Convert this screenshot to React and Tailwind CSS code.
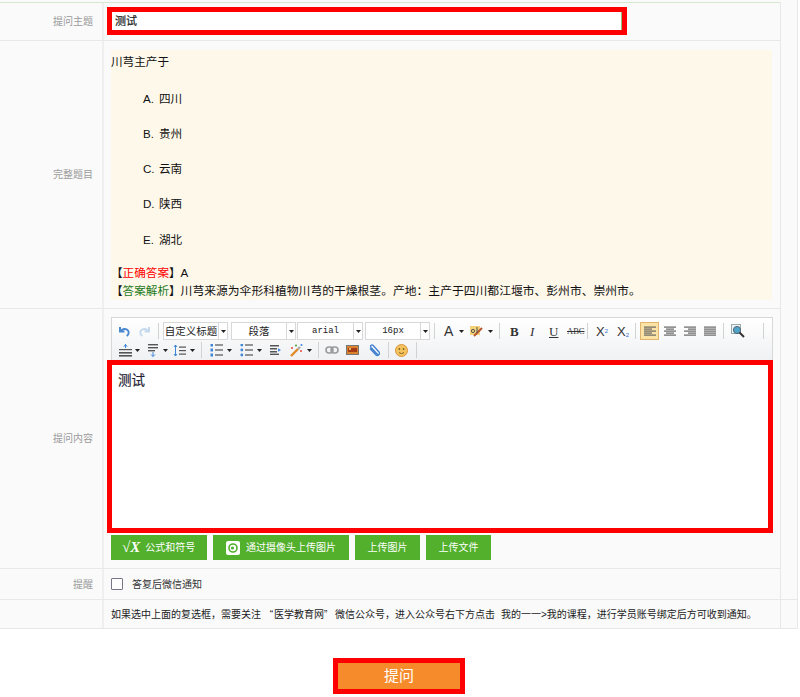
import React from "react";

const font = { fontFamily: '"Liberation Sans","Noto Sans CJK SC",sans-serif' };

function Arrow({ className }) {
  return (
    <svg width="5" height="3" viewBox="0 0 5 3" className={className}>
      <path d="M0 0H5L2.5 3Z" fill="#222" />
    </svg>
  );
}

function Sep({ className }) {
  return <div className={"w-px h-[16px] bg-[#d0d2d4] shrink-0 " + className} />;
}

function Sel({ className, w, text, mono }) {
  return (
    <div className={"h-[18px] flex items-stretch border border-[#d8d8d8] bg-white shrink-0 " + className} style={{ width: w }}>
      <div className={"flex-1 text-center leading-[16px] text-[#222] whitespace-nowrap " + (mono ? "text-[9px] font-['Liberation_Mono']" : "text-[10.5px]")}>{text}</div>
      <div className="w-[9px] border-l border-[#d8d8d8] flex items-center justify-center"><Arrow /></div>
    </div>
  );
}

function Lines({ className, kind }) {
  const rows = kind === "left" ? [[0, 12], [0, 8], [0, 12], [0, 8], [0, 12]] : kind === "center" ? [[0, 12], [2, 10], [0, 12], [2, 10], [0, 12]] : kind === "right" ? [[0, 12], [4, 12], [0, 12], [4, 12], [0, 12]] : [[0, 12], [0, 12], [0, 12], [0, 12], [0, 12]];
  return (
    <svg width="12" height="11" viewBox="0 0 12 11" className={className}>
      {rows.map((r, i) => (
        <rect key={i} x={r[0]} y={i * 2 + 0.5} width={r[1] - r[0]} height="1.2" fill="#666" />
      ))}
    </svg>
  );
}

function ListIcon({ className, dots }) {
  return (
    <svg width="13" height="13" viewBox="0 0 13 13" className={className}>
      {[1, 6, 11].map((y) => (
        <g key={y}>
          <rect x="5" y={y - 0.6} width="8" height="1.2" fill="#555" />
          {dots ? <circle cx="1.8" cy={y} r="1.4" fill="#3f86d8" /> : <rect x="0.5" y={y - 1.5} width="2.5" height="3" fill="#3f86d8" />}
        </g>
      ))}
    </svg>
  );
}

function Row({ label, className, children }) {
  return (
    <div className={"flex border-b border-[#e8e8e8] " + className}>
      <div className="w-[104px] shrink-0 border-r-2 border-[#efefef] flex items-center justify-end pr-[9px] text-[10px] text-[#9a9a9a]">{label}</div>
      <div className="flex-1 min-w-0">{children}</div>
    </div>
  );
}

function GreenBtn({ className, children }) {
  return (
    <div className={"h-[25px] bg-[#52b02c] text-white text-[10px] flex items-center justify-center shrink-0 " + className}>{children}</div>
  );
}

const options = [
  ["A.", "四川"],
  ["B.", "贵州"],
  ["C.", "云南"],
  ["D.", "陕西"],
  ["E.", "湖北"],
];

export default function App() {
  return (
    <div className="w-[800px] h-[697px] bg-white overflow-hidden" style={font}>
      <div className="flex w-[798px] border-r border-[#e8e8e8] bg-[#fafafa] pt-[2px]">
        <div className="w-[780px] border-t border-[#d5e8cf]">
          <Row label="提问主题" className="h-[38px]">
            <div className="ml-[3px] mt-[4px] w-[520px] h-[28px] border-[5px] border-[#ff0000] bg-white flex items-center pl-[3px]">
              <span className="text-[11px] text-[#222] [-webkit-text-stroke:0.2px_#222] flex-1">测试</span>
              <div className="w-px h-full bg-[#8cc47a]" />
            </div>
          </Row>
          <Row label="完整题目" className="h-[268px]">
            <div className="ml-[7px] mt-[9px] w-[661px] h-[250px] bg-[#fef8ea] text-[11.6px] text-[#111]">
              <div className="h-[23px] leading-[23px]">川芎主产于</div>
              <div className="mt-[8px] pl-[32px]">
                {options.map(([k, v]) => (
                  <div key={k} className="h-[35.2px] flex items-center">
                    <span className="w-[16px]">{k}</span>
                    <span>{v}</span>
                  </div>
                ))}
              </div>
              <div className="mt-[7px] h-[18px] leading-[18px] whitespace-nowrap">
                【<span className="text-[#ff0000]">正确答案</span>】A
              </div>
              <div className="h-[18px] leading-[18px] whitespace-nowrap">
                【<span className="text-[#1c7a1c]">答案解析</span>】<span className="text-[11.8px]">川芎来源为伞形科植物川芎的干燥根茎。产地：主产于四川都江堰市、彭州市、崇州市。</span>
              </div>
            </div>
          </Row>
          <Row label="提问内容" className="h-[260px]">
            <div className="pt-[8px]">
              <div className="ml-[7px] w-[662px] h-[43px] border border-[#d8d8d8] border-b-0 bg-gradient-to-b from-white to-[#f0f1f3]">
                <div className="flex items-center h-[18px] mt-[4px]">
                  <svg width="11" height="11" viewBox="0 0 11 11" className="ml-[7px] shrink-0"><path d="M1 1V5.5H5.5M1.3 5.3C3 2.6 7 2 9 4.5C10.2 6.2 9.6 8.6 7.8 10" fill="none" stroke="#4a88cf" strokeWidth="2" /></svg>
                  <svg width="11" height="11" viewBox="0 0 11 11" className="ml-[9px] shrink-0"><path d="M10 1V5.5H5.5M9.7 5.3C8 2.6 4 2 2 4.5C.8 6.2 1.4 8.6 3.2 10" fill="none" stroke="#c5d9ee" strokeWidth="2" /></svg>
                  <Sep className="ml-[8px]" />
                  <Sel className="ml-[4px]" w={65} text="自定义标题" />
                  <Sel className="ml-[3px]" w={65} text="段落" />
                  <Sel className="ml-[1px]" w={66} text="arial" mono />
                  <Sel className="ml-[2px]" w={65} text="16px" mono />
                  <Sep className="ml-[4px]" />
                  <span className="ml-[9px] w-[10px] text-[14px] leading-none text-[#333] shrink-0">A</span>
                  <Arrow className="ml-[5px] shrink-0" />
                  <svg width="14" height="13" viewBox="0 0 14 13" className="ml-[6px] shrink-0"><rect x="0" y="1" width="10" height="9" fill="#f4d27a" /><path d="M4 11L12 3" stroke="#b5562e" strokeWidth="2" /><circle cx="3" cy="6" r="1.6" fill="none" stroke="#555" /><path d="M7 2V8" stroke="#555" /></svg>
                  <Arrow className="ml-[4px] shrink-0" />
                  <Sep className="ml-[6px]" />
                  <span className="ml-[10px] w-[9px] text-[13px] leading-none font-bold text-[#333] font-['Liberation_Serif'] shrink-0">B</span>
                  <span className="ml-[11px] w-[6px] text-[13px] leading-none italic text-[#333] font-['Liberation_Serif'] shrink-0">I</span>
                  <span className="ml-[13px] w-[9px] text-[13px] leading-none underline text-[#333] font-['Liberation_Serif'] shrink-0">U</span>
                  <span className="ml-[9px] w-[14px] text-[8.5px] leading-none line-through text-[#333] font-['Liberation_Serif'] shrink-0">ABC</span>
                  <Sep className="ml-[6px]" />
                  <span className="ml-[8px] w-[12px] text-[13px] leading-none text-[#333] shrink-0 whitespace-nowrap">X<sup className="text-[6px] text-[#2f6fd0]">2</sup></span>
                  <span className="ml-[9px] w-[11px] text-[13px] leading-none text-[#333] shrink-0 whitespace-nowrap">X<sub className="text-[6px] text-[#2f6fd0]">2</sub></span>
                  <Sep className="ml-[7px]" />
                  <div className="ml-[4px] w-[19px] h-[18px] bg-[#fbe3a5] border border-[#e0b46a] flex items-center justify-center shrink-0"><Lines kind="left" /></div>
                  <Lines kind="center" className="ml-[5px] shrink-0" />
                  <Lines kind="right" className="ml-[8px] shrink-0" />
                  <Lines kind="just" className="ml-[8px] shrink-0" />
                  <Sep className="ml-[7px]" />
                  <svg width="14" height="14" viewBox="0 0 14 14" className="ml-[7px] shrink-0"><rect x="0.5" y="0.5" width="9" height="9" fill="#eef3f7" stroke="#9aa" /><circle cx="6" cy="6" r="3.6" fill="#4ea4c8" stroke="#567" /><path d="M8.5 8.5L13 13" stroke="#333" strokeWidth="2" /></svg>
                  <Sep className="ml-[18px]" />
                </div>
                <div className="flex items-center h-[18px] mt-[1px]">
                  <svg width="13" height="13" viewBox="0 0 13 13" className="ml-[7px] shrink-0"><path d="M6.5 0V4M4.8 2.6L6.5 .5L8.2 2.6" fill="none" stroke="#3f86d8" /><rect x="0" y="5" width="13" height="1.2" fill="#555" /><rect x="0" y="8" width="13" height="1.6" fill="#555" /><rect x="0" y="11" width="13" height="1.6" fill="#555" /></svg>
                  <Arrow className="ml-[3px] shrink-0" />
                  <svg width="10" height="13" viewBox="0 0 10 13" className="ml-[8px] shrink-0"><rect x="0" y="0" width="10" height="1.4" fill="#555" /><rect x="0" y="3" width="10" height="1.4" fill="#555" /><rect x="0" y="6" width="7" height="1.4" fill="#555" /><path d="M5 8V12.5M3 10.5L5 12.5L7 10.5" fill="none" stroke="#3f86d8" /></svg>
                  <Arrow className="ml-[5px] shrink-0" />
                  <svg width="13" height="13" viewBox="0 0 13 13" className="ml-[5px] shrink-0"><path d="M2.5 1V12M1 3L2.5 1L4 3M1 10L2.5 12L4 10" fill="none" stroke="#3f86d8" /><rect x="6" y="2.5" width="7" height="1.2" fill="#555" /><rect x="6" y="6" width="7" height="1.2" fill="#555" /><rect x="6" y="9.5" width="7" height="1.2" fill="#555" /></svg>
                  <Arrow className="ml-[4px] shrink-0" />
                  <Sep className="ml-[6px]" />
                  <ListIcon className="ml-[8px] shrink-0" />
                  <Arrow className="ml-[4px] shrink-0" />
                  <ListIcon dots className="ml-[8px] shrink-0" />
                  <Arrow className="ml-[4px] shrink-0" />
                  <svg width="11" height="10" viewBox="0 0 11 10" className="ml-[8px] shrink-0"><rect x="0" y="0" width="9" height="1.5" fill="#555" /><rect x="0" y="3" width="7" height="1.5" fill="#555" /><rect x="0" y="6" width="7" height="1.5" fill="#555" /><rect x="0" y="8.6" width="9" height="1.4" fill="#555" /><path d="M8 3.2L11 5L8 6.8Z" fill="#3f86d8" /></svg>
                  <svg width="13" height="13" viewBox="0 0 13 13" className="ml-[9px] shrink-0"><path d="M1 12L8 5" stroke="#e08a2a" strokeWidth="2.4" /><path d="M8 5L10 3" stroke="#aaa" strokeWidth="2.4" /><circle cx="2" cy="4" r="1" fill="#e04a3a" /><circle cx="6" cy="1.5" r="1" fill="#4a9a3a" /><circle cx="11" cy="7" r="1" fill="#e04a3a" /><circle cx="11.5" cy="1" r="1" fill="#3f86d8" /></svg>
                  <Arrow className="ml-[4px] shrink-0" />
                  <Sep className="ml-[6px]" />
                  <svg width="14" height="8" viewBox="0 0 14 8" className="ml-[6px] shrink-0"><rect x="1" y="1" width="7" height="6" rx="3" fill="none" stroke="#9a9a9a" strokeWidth="1.6" /><rect x="6" y="1" width="7" height="6" rx="3" fill="none" stroke="#9a9a9a" strokeWidth="1.6" /></svg>
                  <svg width="13" height="10" viewBox="0 0 13 10" className="ml-[7px] shrink-0"><rect x="0.5" y="0.5" width="12" height="9" fill="#d9822b" stroke="#777" /><rect x="2" y="3" width="9" height="4" fill="#a33c14" /><circle cx="4" cy="4" r="1" fill="#ffd98a" /></svg>
                  <svg width="12" height="13" viewBox="0 0 12 13" className="ml-[9px] shrink-0"><path d="M10.5 11.5L3 3.5C1.5 1.5 4 .2 5.2 1.5L11 8C12.4 10 10 12.5 8 11L2 4.5" fill="none" stroke="#3f7fd0" strokeWidth="1.3" /></svg>
                  <Sep className="ml-[8px]" />
                  <svg width="13" height="13" viewBox="0 0 13 13" className="ml-[6px] shrink-0"><circle cx="6.5" cy="6.5" r="6" fill="#f3c35e" stroke="#d8933a" /><circle cx="4.4" cy="5" r="0.9" fill="#8a5a1e" /><circle cx="8.6" cy="5" r="0.9" fill="#8a5a1e" /><path d="M4 8.5C5.2 9.8 7.8 9.8 9 8.5" fill="none" stroke="#8a5a1e" /></svg>
                  <Sep className="ml-[8px]" />
                </div>
              </div>
              <div className="ml-[3px] w-[666px] h-[173px] border-[5px] border-[#ff0000] bg-white pl-[6px] pt-[6px] text-[13.5px] leading-[20px] text-[#1f2233] [-webkit-text-stroke:0.2px_#1f2233]">测试</div>
              <div className="ml-[7px] mt-[2px] flex">
                <GreenBtn className="w-[96px] !justify-start pl-[11px]">
                  <span className="italic font-bold text-[15px] leading-none font-['Liberation_Serif'] mr-[5px]">√X</span>公式和符号
                </GreenBtn>
                <GreenBtn className="ml-[6px] w-[136px]">
                  <svg width="14" height="14" viewBox="0 0 14 14" className="mr-[6px]"><rect width="14" height="14" rx="2" fill="#fff" /><circle cx="7" cy="7" r="4" fill="none" stroke="#52b02c" strokeWidth="1.6" /><circle cx="6.5" cy="7" r="1.6" fill="#52b02c" /></svg>
                  通过摄像头上传图片
                </GreenBtn>
                <GreenBtn className="ml-[6px] w-[65px]">上传图片</GreenBtn>
                <GreenBtn className="ml-[6px] w-[65px]">上传文件</GreenBtn>
              </div>
            </div>
          </Row>
          <Row label="提醒" className="h-[31px]">
            <div className="h-full flex items-center pl-[7px] text-[10px] text-[#333]">
              <div className="w-[12px] h-[12px] border border-[#777788] bg-white rounded-[1px]" />
              <span className="ml-[9px]">答复后微信通知</span>
            </div>
          </Row>
          <Row label="" className="h-[29px]">
            <div className="h-full flex items-center pl-[7px] text-[10px] text-[#222] whitespace-nowrap">
              如果选中上面的复选框，需要关注<span className="inline-block w-[13px] text-right pr-[1px]">“</span>医学教育网<span className="inline-block w-[11px]">”</span>微信公众号，进入公众号右下方点击<span className="ml-[6px]">我的一一&gt;我的课程，进行学员账号绑定后方可收到通知。</span>
            </div>
          </Row>
        </div>
        <div className="flex-1 border-l border-[#e8e8e8] flex flex-col justify-end">
          <div className="h-[30px] border-t border-b border-[#e8e8e8]" />
        </div>
      </div>
      <div className="mt-[29px] ml-[333px] w-[132px] h-[36px] border-[5px] border-[#ff0000] bg-[#f68b2c] text-white text-[15px] flex items-center justify-center">提问</div>
    </div>
  );
}
